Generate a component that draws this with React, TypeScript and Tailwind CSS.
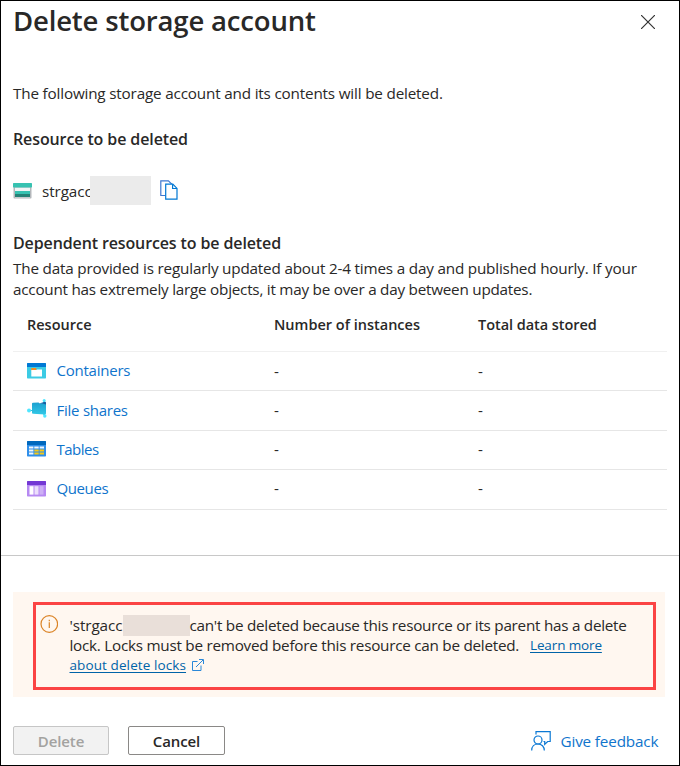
import type { ReactNode } from "react";

function StorageIcon() {
  return (
    <svg className="mt-px" width="19" height="16" viewBox="0 0 19 16">
      <rect x="0.5" y="0.5" width="18" height="15" rx="0.8" fill="#b4b7bb" />
      <rect x="2" y="4.5" width="15" height="9.8" fill="#f3f4f5" />
      <rect x="0" y="0" width="19" height="4.4" rx="0.6" fill="#37c2b1" />
      <rect x="2" y="8" width="15" height="3" fill="#37c2b1" />
      <rect x="2" y="11" width="15" height="3" fill="#258277" />
    </svg>
  );
}

function CopyIcon() {
  return (
    <svg width="18" height="20" viewBox="0 0 18 20" fill="none" strokeWidth="1.2">
      <path d="M5.5 15.5H.8V.8h7.6l3.4 3.4" stroke="#3f78d0" />
      <path d="M5.7 4.2h7.1l4.2 4.2v10.8H5.7z" stroke="#0078d4" fill="#fff" />
      <path d="M12.6 4.2v4.3H17" stroke="#0078d4" />
    </svg>
  );
}

function ContainerIcon() {
  return (
    <svg width="19" height="16" viewBox="0 0 19 16">
      <rect width="19" height="15.5" rx="0.7" fill="#3ccbe4" />
      <path d="M0 4V.7Q0 0 .7 0h17.600q.7 0 .7.700V4z" fill="#0078d4" />
      <rect x="4.300" y="5" width="5" height="3" rx="0.5" fill="#f78d1e" />
      <path d="M4.300 7h5l.9-.6h4.800v7H4.300z" fill="#fff" />
    </svg>
  );
}

function FileShareIcon() {
  return (
    <svg className="-mt-[4px]" width="20" height="19" viewBox="0 0 20 19">
      <defs>
        <linearGradient id="share" x1="0" y1="0" x2="0" y2="1">
          <stop offset="0" stopColor="#1c9fd0" />
          <stop offset="1" stopColor="#32c8e6" />
        </linearGradient>
      </defs>
      <path d="M2 11.500h4M16 5l1.500-3.500M16 14l2 3" stroke="#32bedd" strokeWidth="1.200" />
      <circle cx="2" cy="11.500" r="2" fill="#50e6ff" />
      <circle cx="17.200" cy="1.500" r="1.500" fill="#50e6ff" />
      <circle cx="17.800" cy="17" r="1.700" fill="#50e6ff" />
      <path d="M5 4.800q0-1 1-1.100l5.500-.3 1.300 1.200 5.200-.9q1 0 1 1v9.500q0 1.200-1 1.200L6 14.700q-1 0-1-1z" fill="url(#share)" />
      <path d="M12 4.400l6-1.700q1 0 1 1V5.500l-3.500-1z" fill="#155ea1" />
    </svg>
  );
}

function TableIcon() {
  return (
    <svg width="19" height="16" viewBox="0 0 19 16">
      <rect width="19" height="15.500" rx="0.700" fill="#2f8fea" />
      <path d="M0 4V.7Q0 0 .7 0h17.600q.7 0 .7.700V4z" fill="#0068bd" />
      <path d="M2 5.400h4.400v2.200H2zM7.300 5.400h4.400v2.200H7.300zM12.600 5.400H17v2.200h-4.400zM2 8.400h4.400v2.200H2zM2 11.400h4.400v2.200H2z" fill="#f2f7fc" />
      <path d="M7.300 8.400h4.400v2.200H7.300zM12.600 8.400H17v2.200h-4.400zM7.300 11.400h4.400v2.200H7.300zM12.600 11.400H17v2.200h-4.400z" fill="#f6c915" />
    </svg>
  );
}

function QueueIcon() {
  return (
    <svg width="19" height="16" viewBox="0 0 19 16">
      <rect width="19" height="15.500" rx="0.700" fill="#b689f2" />
      <path d="M0 4V.7Q0 0 .7 0h17.600q.7 0 .7.700V4z" fill="#7338d4" />
      <rect x="2.500" y="5.200" width="4" height="8.400" fill="#fff" />
      <rect x="7.500" y="5.200" width="4" height="8.400" fill="#ecdffb" />
      <rect x="12.500" y="5.200" width="4" height="8.400" fill="#cdb0f5" />
    </svg>
  );
}

function InfoIcon() {
  return (
    <svg width="18" height="18" viewBox="0 0 18 18">
      <circle cx="9.300" cy="9" r="8.300" fill="none" stroke="#db8427" strokeWidth="1.200" />
      <path d="M9.300 7.300v5.700M9.300 4.800v1.400" stroke="#db8427" strokeWidth="1.200" />
    </svg>
  );
}

function ExternalIcon() {
  return (
    <svg width="12" height="12" viewBox="0 0 12 12" fill="none" stroke="#2b88d8">
      <path d="M5.500 2.500h-5v9h8.500V6.500M4 8l7-7M7 .5h4.500V5" />
    </svg>
  );
}

function FeedbackIcon() {
  return (
    <svg width="20" height="20" viewBox="0 0 20 20" fill="none" stroke="#0b78d4" strokeWidth="1.200">
      <path d="M5 3.500V.7h14.200v9.800h-2.500l-3 2.800v-2.800h-1.200" />
      <circle cx="7" cy="9" r="4" />
      <path d="M.7 19.500c0-3.900 2.600-6.500 6.300-6.500s6.300 2.600 6.300 6.500" />
    </svg>
  );
}

const rows: { icon: ReactNode; name: ReactNode; height: string }[] = [
  { icon: <ContainerIcon />, name: <span className="pb-[2px] tracking-[-0.230px]">Containers</span>, height: "h-[39px]" },
  { icon: <FileShareIcon />, name: <span className="tracking-[-0.250px]">File shares</span>, height: "h-[40px]" },
  { icon: <TableIcon />, name: <span className="tracking-[-0.5px]">Tables</span>, height: "h-[39px] pb-[2px]" },
  { icon: <QueueIcon />, name: <span className="tracking-[-0.4px]">Queues</span>, height: "h-[40px] pb-[2px]" },
];

const columns = "grid grid-cols-[247px_204px_1fr] pl-[14px]";

export default function App() {
  return (
    <div className="flex h-[766px] w-[680px] flex-col overflow-hidden border border-black bg-white font-['Open_Sans','Noto_Sans',sans-serif] text-[15.250px] text-[#292827] whitespace-nowrap">
      <header className="flex h-[40px] items-center justify-between pl-3 pr-[24px]">
        <h1 className="text-[27.500px] leading-[38px] font-[560] tracking-[-0.160px]">Delete storage account</h1>
        <svg className="mt-[2px]" width="14" height="14" viewBox="0 0 14 14" stroke="#333" strokeWidth="1.200">
          <path d="M0 0l14 14M14 0L0 14" />
        </svg>
      </header>

      <main className="flex h-[514px] flex-col pl-3 pr-[12px] pt-[41px]">
        <p className="h-[22px] leading-[22px] tracking-[-0.175px]">The following storage account and its contents will be deleted.</p>
        <h2 className="mt-[24px] h-[22px] text-[16px] leading-[22px] font-[580] tracking-[-0.110px]">Resource to be deleted</h2>
        <div className="mt-[25px] flex h-[30px] items-center">
          <StorageIcon />
          <span className="ml-[10px] w-[48px] pt-[3px] tracking-[-0.1px]">strgacc</span>
          <span className="z-10 h-[29px] w-[61px] bg-[#ebebeb]" />
          <span className="ml-[9px]"><CopyIcon /></span>
        </div>
        <h2 className="mt-[27px] h-[22px] text-[16px] leading-[22px] font-[580] tracking-[-0.120px]">Dependent resources to be deleted</h2>
        <p className="mt-[4px] leading-[21px]">
          <span className="tracking-[-0.185px]">The data provided is regularly updated about 2-4 times a day and published hourly. If your</span>
          <br />
          <span className="tracking-[-0.235px]">account has extremely large objects, it may be over a day between updates.</span>
        </p>
        <div>
          <div className={`${columns} h-[52px] items-center border-b border-[#f0f0f0] pb-[2px] text-[14.500px] font-[580]`}>
            <span>Resource</span>
            <span>Number of instances</span>
            <span className="tracking-[-0.050px]">Total data stored</span>
          </div>
          {rows.map((row, i) => (
            <div key={i} className={`${columns} ${row.height} items-center border-b border-[#e6e6e6]`}>
              <span className="flex items-center text-[15px] text-[#0f74cc]">
                <span className="w-[29.500px]">{row.icon}</span>
                {row.name}
              </span>
              <span>-</span>
              <span>-</span>
            </div>
          ))}
        </div>
      </main>

      <footer className="flex flex-1 flex-col border-t border-[#c8c8c8] px-3 pt-[36px]">
        <div className="h-[105px] w-[652px] bg-[#fff7f0] pl-[20px] pt-[10px]">
          <div className="flex h-[88px] w-[623px] border-3 border-[#fb4444] pl-[4px] pt-[10px]">
            <InfoIcon />
            <div className="ml-[11.500px] h-[60px] leading-[20px]">
              <div className="flex h-[20px] items-center">
                <span className="w-[53.500px] tracking-[-0.1px]">'strgacc</span>
                <span className="h-[21px] w-[66.500px] shrink-0 bg-[#e9dfd9]" />
                <span className="tracking-[-0.255px]">can't be deleted because this resource or its parent has a delete</span>
              </div>
              <div className="flex h-[20px]">
                <span className="w-[460.500px] tracking-[-0.250px]">lock. Locks must be removed before this resource can be deleted.</span>
                <a className="text-[13.500px] tracking-[-0.130px] text-[#0063a8] underline underline-offset-2">Learn more</a>
              </div>
              <div className="flex h-[20px] items-center">
                <a className="-mt-px text-[13.500px] tracking-[0.100px] text-[#0063a8] underline underline-offset-2">about delete locks</a>
                <span className="ml-[6px]"><ExternalIcon /></span>
              </div>
            </div>
          </div>
        </div>
        <div className="mt-[29px] flex h-[29px] items-center">
          <button className="h-[29px] w-[96px] rounded-[2px] border border-[#c6c6c6] bg-[#f2f2f2] pt-[2px] text-[15px] font-[580] tracking-[-0.1px] text-[#a3a2a0]">Delete</button>
          <button className="ml-[19px] h-[29px] w-[97px] rounded-[2px] border border-[#8a8886] pt-[2px] text-[15px] font-[580] tracking-[-0.1px]">Cancel</button>
          <span className="ml-[306px]"><FeedbackIcon /></span>
          <a className="ml-[9.500px] pt-[2px] tracking-[-0.150px] text-[#0f74cc]">Give feedback</a>
        </div>
      </footer>
    </div>
  );
}
